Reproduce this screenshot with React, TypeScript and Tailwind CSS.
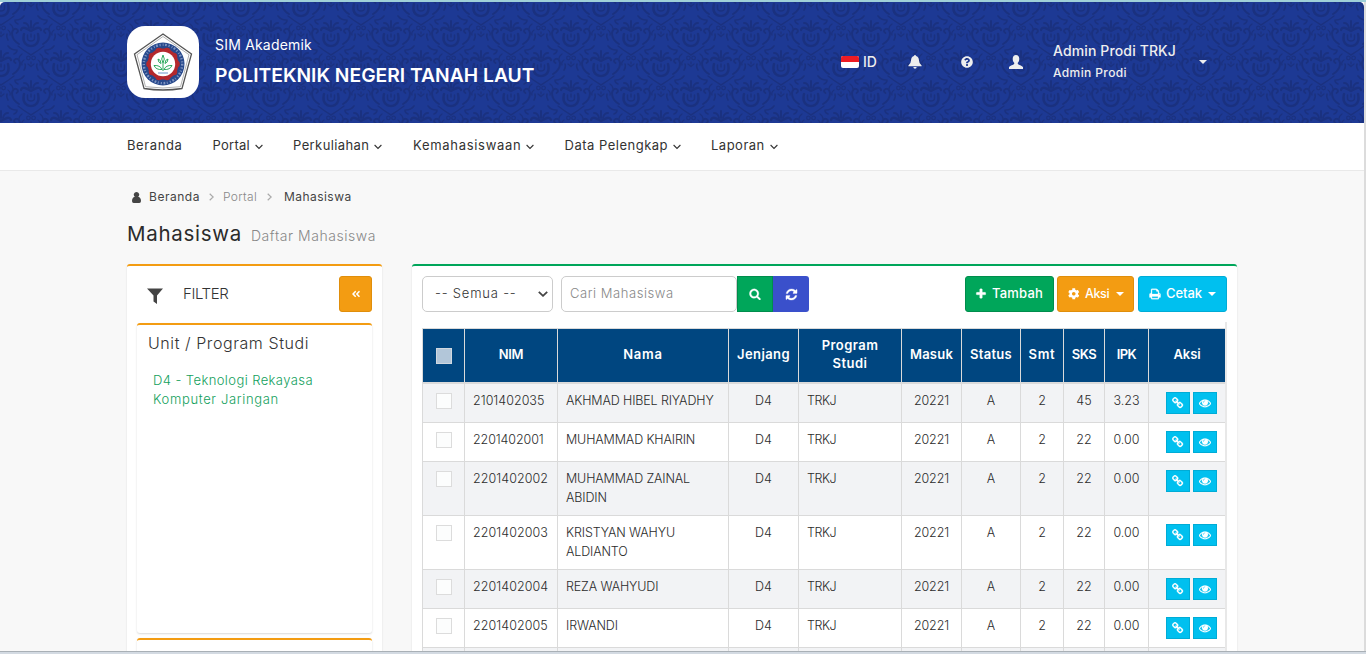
import type { ReactNode } from "react";
import { FaAngleDoubleLeft, FaCog, FaQuestionCircle } from "react-icons/fa";

const paths = {
  link: "M1456 1216q0-40-28-68l-208-208q-28-28-68-28-42 0-72 32 3 3 19 18.5t21.5 21.5 15 19 13 25.5 3.5 27.5q0 40-28 68t-68 28q-15 0-27.5-3.5t-25.5-13-19-15-21.5-21.5-18.5-19q-33 31-33 73 0 40 28 68l206 207q27 27 68 27 40 0 68-26l147-146q28-28 28-67zm-703-705q0-40-28-68l-206-207q-28-28-68-28-39 0-68 27l-147 146q-28 28-28 67 0 40 28 68l208 208q27 27 68 27 42 0 72-31-3-3-19-18.5t-21.5-21.5-15-19-13-25.5-3.5-27.5q0-40 28-68t68-28q15 0 27.5 3.5t25.5 13 19 15 21.5 21.5 18.5 19q33-31 33-73zm895 705q0 120-85 203l-147 146q-83 83-203 83-121 0-204-85l-206-207q-83-83-83-203 0-123 88-209l-88-88q-86 88-208 88-120 0-204-84l-208-208q-84-84-84-204t85-203l147-146q83-83 203-83 121 0 204 85l206 207q83 83 83 203 0 123-88 209l88 88q86-88 208-88 120 0 204 84l208 208q84 84 84 204z",
  eye: "M1664 960q-152-236-381-353 61 104 61 225 0 185-131.5 316.5t-316.5 131.5-316.5-131.5-131.5-316.5q0-121 61-225-229 117-381 353 133 205 333.5 326.5t434.5 121.5 434.5-121.5 333.5-326.5zm-720-384q0-20-14-34t-34-14q-125 0-214.5 89.5t-89.5 214.5q0 20 14 34t34 14 34-14 14-34q0-86 61-147t147-61q20 0 34-14t14-34zm848 384q0 34-20 69-140 230-376.5 368.5t-499.5 138.5-499.5-139-376.5-368q-20-35-20-69t20-69q140-229 376.5-368t499.5-139 499.5 139 376.5 368q20 35 20 69z",
  search: "M1216 832q0-185-131.5-316.5t-316.5-131.5-316.5 131.5-131.5 316.5 131.5 316.5 316.5 131.5 316.5-131.5 131.5-316.5zm512 832q0 52-38 90t-90 38q-54 0-90-38l-343-342q-179 124-399 124-143 0-273.5-55.5t-225-150-150-225-55.5-273.5 55.5-273.5 150-225 225-150 273.5-55.5 273.5 55.5 225 150 150 225 55.5 273.5q0 220-124 399l343 343q37 37 37 90z",
  refresh: "M1639 1056q0 5-1 7-64 268-268 434.5t-478 166.5q-146 0-282.5-55t-243.5-157l-129 129q-19 19-45 19t-45-19-19-45v-448q0-26 19-45t45-19h448q26 0 45 19t19 45-19 45l-137 137q71 66 161 102t187 36q134 0 250-65t186-179q11-17 53-117 8-23 30-23h192q13 0 22.5 9.5t9.5 22.5zm25-800v448q0 26-19 45t-45 19h-448q-26 0-45-19t-19-45 19-45l138-138q-148-137-349-137-134 0-250 65t-186 179q-11 17-53 117-8 23-30 23h-199q-13 0-22.5-9.5t-9.5-22.5v-7q65-268 270-434.5t480-166.5q146 0 284 55.5t245 156.5l130-129q19-19 45-19t45 19 19 45z",
  plus: "M1600 736v192q0 40-28 68t-68 28h-416v416q0 40-28 68t-68 28h-192q-40 0-68-28t-28-68v-416h-416q-40 0-68-28t-28-68v-192q0-40 28-68t68-28h416v-416q0-40 28-68t68-28h192q40 0 68 28t28 68v416h416q40 0 68 28t28 68z",
  print: "M448 1536h896v-256h-896v256zm0-640h896v-384h-160q-40 0-68-28t-28-68v-160h-640v640zm1152 64q0-26-19-45t-45-19-45 19-19 45 19 45 45 19 45-19 19-45zm128 0v416q0 13-9.5 22.5t-22.5 9.500h-224v160q0 40-28 68t-68 28h-960q-40 0-68-28t-28-68v-160h-224q-13 0-22.5-9.5t-9.5-22.5v-416q0-79 56.5-135.5t135.5-56.5h64v-544q0-40 28-68t68-28h672q40 0 88 20t76 48l152 152q28 28 48 76t20 88v256h64q79 0 135.5 56.5t56.5 135.5z",
};

function Icon({ name, className }: { name: keyof typeof paths; className: string }) {
  return (
    <svg viewBox="0 0 1792 1792" fill="currentColor" stroke="currentColor" strokeWidth="40" className={className}>
      <path d={paths[name]} />
    </svg>
  );
}

function Caret({ className }: { className: string }) {
  return (
    <svg viewBox="0 0 8 4" fill="currentColor" className={`h-1 w-2 ${className}`}>
      <path d="M0 0h8L4 4z" />
    </svg>
  );
}

function Motif({ x, y }: { x: number; y: number }) {
  return (
    <g transform={`translate(${x} ${y})`} fill="none" stroke="#1a3180" strokeLinecap="round">
      <path d="M-7-4Q-9 4-4 7Q0 9 4 7Q9 4 7-4" strokeWidth="2.600" />
      <path d="M-3.500-3v3q0 3 3.500 3t3.500-3v-3M0-4v3" strokeWidth="1.600" />
      <path d="M-10-8q1-3 4-2t6 3q3-2 6-3t4 2" strokeWidth="2.400" />
      <path d="M-7-15q4 0 5 5M7-15q-4 0-5 5M0-17v7" strokeWidth="2" />
      <path d="M-13 8Q-8 12 0 17Q8 12 13 8" strokeWidth="1.500" />
      <path d="M-12 6Q-19 2-19-5q1-5 4.500-4q3 2 0 4M12 6Q19 2 19-5q-1-5-4.500-4q-3 2 0 4" strokeWidth="2" />
      <path d="M-15 12q-5 0-8-4M15 12q5 0 8-4M-13-14q-3-1-3-4M13-14q3-1 3-4M-23 2q-2-3-1-6M23 2q2-3 1-6" strokeWidth="1.700" />
      <path d="M-9 16q-3 2-3 5M9 16q3 2 3 5M-7 22q-3 2-2 5M7 22q3 2 2 5" strokeWidth="1.400" />
      <circle cx="-2.600" cy="20" r="1.800" strokeWidth="1.300" />
      <circle cx="2.600" cy="20" r="1.800" strokeWidth="1.300" />
      <path d="M0 24v2M-3 26l3 2.500 3-2.500" strokeWidth="1.400" />
    </g>
  );
}

function Damask() {
  return (
    <svg className="absolute inset-0 h-full w-full" aria-hidden="true">
      <defs>
        <pattern id="damask" x="1" y="6" width="60" height="60" patternUnits="userSpaceOnUse">
          <Motif x={30} y={30} />
          <Motif x={0} y={0} />
          <Motif x={60} y={0} />
          <Motif x={0} y={60} />
          <Motif x={60} y={60} />
          <Motif x={30} y={-30} />
          <Motif x={30} y={90} />
        </pattern>
      </defs>
      <rect width="100%" height="100%" fill="url(#damask)" />
    </svg>
  );
}

function Logo() {
  const flutes = Array.from({ length: 10 }, (_, i) => {
    const a = (i * Math.PI) / 5;
    return <circle key={i} cx={36 + 13.2 * Math.cos(a)} cy={38 + 13.2 * Math.sin(a)} r="3.600" fill="#b3282d" />;
  });
  return (
    <div className="size-18 rounded-[18px] bg-white">
      <svg viewBox="0 0 72 72" className="size-18">
        <path d="M36 8L64.500 28L55 62.500Q36 65.500 17 62.500L7.500 28Z" fill="#fff" stroke="#555" strokeWidth="1.300" />
        <path d="M36 10.500L62 28.700L53.500 60.700Q36 63.300 18.500 60.700L10 28.700Z" fill="none" stroke="#a0a0a0" strokeWidth=".8" />
        <circle cx="36" cy="38" r="21.500" fill="#27498c" />
        <circle cx="36" cy="38" r="19.200" fill="none" stroke="#7f94c0" strokeWidth="2.400" strokeDasharray="1.800 1.700 1.200 2.100 .9 1.500" />
        <circle cx="36" cy="38" r="15.500" fill="#b3282d" />
        {flutes}
        <circle cx="36" cy="38" r="12.200" fill="#fff" />
        <g fill="none" stroke="#19a04d" strokeWidth=".9">
          <path d="M36 29q-2.600 4 0 8q2.600-4 0-8zM36 45v-8M35 43.500q-6 .5-8-4q6-.5 8 4zM37 43.500q6 .5 8-4q-6-.5-8 4zM34 37.500q-3-1-3-4.500q3 .5 3 4.500zM38 37.500q3-1 3-4.500q-3 .5-3 4.500z" />
        </g>
        <path d="M31 47h10" stroke="#6d93c9" strokeWidth="1.200" />
      </svg>
    </div>
  );
}

function Header() {
  return (
    <header className="relative h-[121px] shrink-0 overflow-hidden rounded-t-[5px] bg-[#1d3994]">
      <Damask />
      <div className="relative ml-[127px] flex h-[119px] w-[1110px] items-center">
        <Logo />
        <div className="ml-4 w-[626px] whitespace-nowrap text-white">
          <div className="text-sm leading-5 tracking-[0.2px]">SIM Akademik</div>
          <div className="mt-1.5 text-[19.300px] leading-7 font-semibold">POLITEKNIK NEGERI TANAH LAUT</div>
        </div>
        <div className="flex w-[67px] items-center gap-1 text-[#eee]">
          <span className="flex h-3 w-[18px] flex-col overflow-hidden rounded-[2px] bg-white">
            <span className="h-1.5 bg-[#ed1c24]" />
          </span>
          <span className="text-sm leading-5 font-medium">ID</span>
        </div>
        <svg viewBox="0 0 14 14" className="size-3.5 text-[#eee]" fill="currentColor">
          <path d="M7 0q1 0 1 1.100Q10.800 2 11 5.500Q11.100 8.800 13.600 10.600V11.300H.4V10.600Q2.900 8.800 3 5.500Q3.200 2 6 1.100Q6 0 7 0zM5.300 12h3.400Q8.500 13.800 7 13.800T5.300 12z" />
        </svg>
        <FaQuestionCircle className="ml-[39px] size-3 text-[#eee]" />
        <svg viewBox="0 0 14 14" className="ml-9 size-3.5 text-[#eee]" fill="currentColor">
          <path d="M7 0c2 0 3.300 1.500 3.300 3.800 0 1.800-.6 3.200-1.500 4v1.100c.2.800 4.800 1.600 5.200 3.400V14H0v-1.700c.4-1.800 5-2.600 5.200-3.400V7.800c-.9-.8-1.500-2.200-1.500-4C3.700 1.500 5 0 7 0z" />
        </svg>
        <div className="ml-[30px] w-[146px] font-medium whitespace-nowrap text-[#eee]">
          <div className="text-sm leading-5 tracking-[0.13px]">Admin Prodi TRKJ</div>
          <div className="mt-0.5 text-xs leading-5 tracking-[0.39px]">Admin Prodi</div>
        </div>
        <Caret className="text-[#eee]" />
      </div>
    </header>
  );
}

function NavItem({ width, menu = true, children }: { width: string; menu?: boolean; children: ReactNode }) {
  return (
    <a className={`flex items-center gap-[5px] ${width}`}>
      {children}
      {menu && (
        <svg viewBox="0 0 8 6" className="mt-0.5 h-1.5 w-2" fill="none" stroke="currentColor" strokeWidth="1.100">
          <path d="M.6 1L4 4.500 7.400 1" />
        </svg>
      )}
    </a>
  );
}

function Nav() {
  return (
    <nav className="flex h-12 shrink-0 items-center border-b border-[#e9e9e9] bg-white pb-0.5 pl-[127px] text-[13px] whitespace-nowrap text-[#333]">
      <NavItem width="w-[85.500px]" menu={false}><span className="tracking-[0.6px]">Beranda</span></NavItem>
      <NavItem width="w-[80.500px]"><span className="tracking-[0.250px]">Portal</span></NavItem>
      <NavItem width="w-30"><span className="tracking-[0.4px]">Perkuliahan</span></NavItem>
      <NavItem width="w-[151.500px]"><span className="tracking-[0.7px]">Kemahasiswaan</span></NavItem>
      <NavItem width="w-[146.500px]"><span className="tracking-[0.5px]">Data Pelengkap</span></NavItem>
      <NavItem width="w-20"><span className="tracking-[0.5px]">Laporan</span></NavItem>
    </nav>
  );
}

function Sep() {
  return (
    <svg viewBox="0 0 5 8" className="h-2 w-[5px] text-[#aaa]" fill="none" stroke="currentColor" strokeWidth="1.200">
      <path d="M.7.7L4.200 4 .7 7.300" />
    </svg>
  );
}

function Heading() {
  return (
    <div className="h-[93px] pt-4 whitespace-nowrap">
      <div className="flex h-5 items-center pl-[5px] text-xs text-[#444]">
        <svg viewBox="0 0 9 11" className="h-[11px] w-[9px]" fill="currentColor">
          <path d="M4.500 0a2.700 2.700 0 0 1 1.700 4.800Q9 5.500 9 9q0 2-1.700 2H1.700Q0 11 0 9q0-3.500 2.800-4.200A2.700 2.700 0 0 1 4.500 0z" />
        </svg>
        <span className="ml-2 w-[60px] tracking-[0.53px]">Beranda</span>
        <Sep />
        <span className="ml-[9px] w-[44px] font-light tracking-[0.31px] text-[#888]">Portal</span>
        <Sep />
        <span className="ml-3 tracking-[0.450px]">Mahasiswa</span>
      </div>
      <h1 className="mt-3 flex items-baseline leading-[30px]">
        <span className="w-31 text-[20.500px] tracking-[0.7px] text-[#2b2b2b]">Mahasiswa</span>
        <span className="text-sm font-light tracking-[0.55px] text-[#888]">Daftar Mahasiswa</span>
      </h1>
    </div>
  );
}

function FilterPanel() {
  return (
    <aside className="flex h-[500px] w-[255px] shrink-0 flex-col rounded-t-[3px] border-t-2 border-[#f39c12] bg-white px-2.5 pt-2.5 shadow-[0_1px_2px_rgba(0,0,0,0.12)]">
      <div className="flex h-9 shrink-0 items-center">
        <svg viewBox="0 0 16 16" className="mt-[3px] ml-2.5 size-4 text-[#444]" fill="currentColor">
          <path d="M0 .5h16L10 7.500V16L6.500 13.500V7.500z" />
        </svg>
        <span className="mt-px ml-5 flex-1 text-[15px] font-light tracking-[-0.400px] text-[#333]">FILTER</span>
        <button className="flex h-9 w-[33px] items-center justify-center rounded-[3px] border border-[#e08e0b] bg-[#f39c12] text-white">
          <FaAngleDoubleLeft className="size-2.5" />
        </button>
      </div>
      <section className="mt-[11px] h-[310px] shrink-0 rounded-[3px] border-t-2 border-[#f39c12] px-[11px] pt-1.5 whitespace-nowrap shadow-[0_1px_2px_rgba(0,0,0,0.15)]">
        <h2 className="text-base leading-6 font-light tracking-[0.57px] text-[#333]">Unit / Program Studi</h2>
        <div className="mt-4 pl-[5px] text-[13px] leading-[19px] text-[#12a05c]">
          <div className="font-light tracking-[0.41px]">D4 - Teknologi Rekayasa</div>
          <div className="font-light tracking-[0.66px]">Komputer Jaringan</div>
        </div>
      </section>
      <section className="mt-[5px] h-20 shrink-0 rounded-[3px] border-t-2 border-[#f39c12] shadow-[0_1px_2px_rgba(0,0,0,0.15)]" />
    </aside>
  );
}

function Toolbar() {
  return (
    <div className="flex h-9 items-center text-[13px] whitespace-nowrap text-white">
      <div className="flex h-9 w-[131px] items-center justify-between rounded-[5px] border border-[#ccc] pr-1 pl-3 font-light tracking-[0.8px] text-[#333]">
        -- Semua --
        <svg viewBox="0 0 10 6" className="h-1.5 w-2.5" fill="none" stroke="#444" strokeWidth="1.800">
          <path d="M.8.8L5 4.800 9.200.8" />
        </svg>
      </div>
      <div className="ml-2 flex h-9 w-44 items-center rounded-[5px] border border-[#ccc] pl-2 font-light tracking-[0.550px] text-[#888]">Cari Mahasiswa</div>
      <button className="flex h-9 w-9 items-center justify-center border border-[#008d4c] bg-[#00a65a]"><Icon name="search" className="size-3" /></button>
      <button className="flex h-9 w-9 items-center justify-center rounded-r-[3px] bg-[#3a50cb]"><Icon name="refresh" className="size-[13px]" /></button>
      <div className="ml-auto flex font-medium">
        <button className="flex h-9 w-[89px] items-center rounded-[3px] border border-[#008d4c] bg-[#00a65a] pl-[9px]">
          <Icon name="plus" className="size-3" />
          <span className="ml-[5px] tracking-[0.19px]">Tambah</span>
        </button>
        <button className="ml-[3px] flex h-9 w-[77px] items-center rounded-[3px] border border-[#e08e0b] bg-[#f39c12] pl-[10px]">
          <FaCog className="size-[11.500px]" />
          <span className="ml-[5.500px] text-[12.500px] tracking-[-0.400px]">Aksi</span>
          <Caret className="ml-[7px]" />
        </button>
        <button className="ml-1 flex h-9 w-[89px] items-center rounded-[3px] border border-[#00acd6] bg-[#00c0ef] pl-2.5">
          <Icon name="print" className="size-3" />
          <span className="ml-[5px] tracking-[-0.060px]">Cetak</span>
          <Caret className="ml-[6px]" />
        </button>
      </div>
    </div>
  );
}

const columns = "grid grid-cols-[42px_93px_171px_70px_103px_60px_59px_43px_41px_44px_77px]";

const heads: [string, string][] = [
  ["NIM", "tracking-[-0.400px]"],
  ["Nama", "tracking-[0.8px]"],
  ["Jenjang", "tracking-[0.41px]"],
  ["Program Studi", "tracking-[0.45px]"],
  ["Masuk", "tracking-[0.21px]"],
  ["Status", "tracking-[0.29px]"],
  ["Smt", "tracking-[0.7px]"],
  ["SKS", "tracking-[-0.500px]"],
  ["IPK", "tracking-[-0.600px]"],
  ["Aksi", "tracking-[-0.050px]"],
];

interface Student {
  nim: string;
  name: string[];
  sks: string;
  ipk: string;
  height: string;
  nimSpacing: string;
}

const students: Student[] = [
  { nim: "2101402035", name: ["AKHMAD HIBEL RIYADHY"], sks: "45", ipk: "3.23", height: "h-[39px]", nimSpacing: "tracking-[0.020px]" },
  { nim: "2201402001", name: ["MUHAMMAD KHAIRIN"], sks: "22", ipk: "0.00", height: "h-[39px]", nimSpacing: "tracking-[-0.100px]" },
  { nim: "2201402002", name: ["MUHAMMAD ZAINAL", "ABIDIN"], sks: "22", ipk: "0.00", height: "h-[54px]", nimSpacing: "tracking-[0.060px]" },
  { nim: "2201402003", name: ["KRISTYAN WAHYU", "ALDIANTO"], sks: "22", ipk: "0.00", height: "h-[54px]", nimSpacing: "tracking-[0.060px]" },
  { nim: "2201402004", name: ["REZA WAHYUDI"], sks: "22", ipk: "0.00", height: "h-[39px]", nimSpacing: "tracking-[0.060px]" },
  { nim: "2201402005", name: ["IRWANDI"], sks: "22", ipk: "0.00", height: "h-[39px]", nimSpacing: "tracking-[0.060px]" },
];

function Cell({ className = "", children }: { className?: string; children?: ReactNode }) {
  return <div className={`border-l border-[#dadada] pt-2 ${className}`}>{children}</div>;
}

function StudentRow({ s, striped }: { s: Student; striped: boolean }) {
  return (
    <div className={`${columns} ${s.height} border-b border-[#dadada] ${striped ? "bg-[#f2f3f5]" : "bg-white"} text-center`}>
      <Cell><div className="mt-px ml-[13px] size-4 border border-[#dcdcdc] bg-[#fcfdfd]" /></Cell>
      <Cell className={`pl-2 text-left ${s.nimSpacing}`}>{s.nim}</Cell>
      <Cell className="pl-2 text-left tracking-[-0.130px]">
        {s.name.map((line) => <div key={line}>{line}</div>)}
      </Cell>
      <Cell>D4</Cell>
      <Cell className="pl-2 text-left tracking-[-0.500px]">TRKJ</Cell>
      <Cell className="tracking-[-0.100px]">20221</Cell>
      <Cell>A</Cell>
      <Cell>2</Cell>
      <Cell>{s.sks}</Cell>
      <Cell>{s.ipk}</Cell>
      <Cell className="flex gap-[3px] pl-[17px]">
        <button className="flex h-[22px] w-6 items-center justify-center border border-[#00acd6] bg-[#00c0ef] text-white"><Icon name="link" className="size-3" /></button>
        <button className="flex h-[22px] w-6 items-center justify-center border border-[#00acd6] bg-[#00c0ef] text-white"><Icon name="eye" className="size-3" /></button>
      </Cell>
    </div>
  );
}

function StudentTable() {
  return (
    <div className="mt-[10px] flex w-[805px] border-r-2 border-[#e8e8e8] pt-1.5 whitespace-nowrap">
      <div className="w-[803px]">
        <div className={`${columns} h-[56px] border-t border-b-2 border-[#dadada] bg-[#004680] text-[13px] leading-[18px] font-semibold text-white`}>
          <div className="flex items-center border-l border-[#dadada] pl-[13px]"><span className="size-4 border border-[#d0d8e0] bg-[#b2c6d9]" /></div>
          {heads.map(([label, spacing]) => (
            <div key={label} className={`flex items-center justify-center border-l border-[#dadada] pb-[3px] text-center ${spacing}`}>
              {label === "Program Studi" ? <span>Program<br />Studi</span> : label}
            </div>
          ))}
        </div>
        <div className="text-[12.500px] leading-[18.500px] font-light text-[#2b2b2b]">
          {students.map((s, i) => <StudentRow key={s.nim} s={s} striped={i % 2 === 0} />)}
          <div className={`${columns} h-10 bg-[#f2f3f5]`}>
            {Array.from({ length: 11 }, (_, i) => <Cell key={i} />)}
          </div>
        </div>
      </div>
    </div>
  );
}

export default function App() {
  return (
    <div className="flex h-[654px] w-[1366px] flex-col overflow-hidden bg-[#d3dae2] font-['Inter',sans-serif]">
      <div className="h-0.5 shrink-0 bg-[#9fd0d8]" />
      <div className="h-[649px] shrink-0 overflow-hidden bg-[#dcdcdc] pr-0.5">
        <div className="flex h-[649px] flex-col overflow-hidden bg-[#f8f8f8]">
          <Header />
          <Nav />
          <main className="px-[127px]">
            <Heading />
            <div className="flex items-start gap-[30px]">
              <FilterPanel />
              <section className="h-[500px] w-[825px] shrink-0 rounded-t-[3px] border-t-2 border-[#00a65a] bg-white px-2.5 pt-2.5 shadow-[0_1px_2px_rgba(0,0,0,0.12)]">
                <Toolbar />
                <StudentTable />
              </section>
            </div>
          </main>
        </div>
      </div>
      <div className="h-[3px] shrink-0 border-t border-[#a9b0b6]" />
    </div>
  );
}
